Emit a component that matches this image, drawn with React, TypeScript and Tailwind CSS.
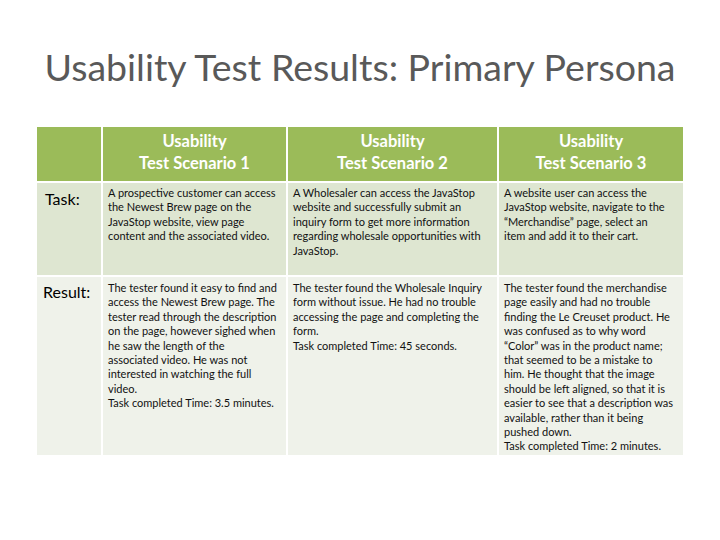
import React from "react";

const scenarios = [
  {
    title: ["Usability", "Test Scenario 1"],
    task: [
      "A prospective customer can access",
      "the Newest Brew page on the",
      "JavaStop website, view page",
      "content and the associated video.",
    ],
    result: [
      "The tester found it easy to find and",
      "access the Newest Brew page. The",
      "tester read through the description",
      "on the page, however sighed when",
      "he saw the length of the",
      "associated video. He was not",
      "interested in watching the full",
      "video.",
      "Task completed Time: 3.5 minutes.",
    ],
  },
  {
    title: ["Usability", "Test Scenario 2"],
    task: [
      "A Wholesaler can access the JavaStop",
      "website and successfully submit an",
      "inquiry form to get more information",
      "regarding wholesale opportunities with",
      "JavaStop.",
    ],
    result: [
      "The tester found the Wholesale Inquiry",
      "form without issue. He had no trouble",
      "accessing the page and completing the",
      "form.",
      "Task completed Time: 45 seconds.",
    ],
  },
  {
    title: ["Usability", "Test Scenario 3"],
    task: [
      "A website user can access the",
      "JavaStop website, navigate to the",
      "\u201cMerchandise\u201d page, select an",
      "item and add it to their cart.",
    ],
    result: [
      "The tester found the merchandise",
      "page easily and had no trouble",
      "finding the Le Creuset product. He",
      "was confused as to why word",
      "\u201cColor\u201d was in the product name;",
      "that seemed to be a mistake to",
      "him. He thought that the image",
      "should be left aligned, so that it is",
      "easier to see that a description was",
      "available, rather than it being",
      "pushed down.",
      "Task completed Time: 2 minutes.",
    ],
  },
];

const Lines: React.FC<{ lines: string[] }> = ({ lines }) => (
  <>
    {lines.map((line, i) => (
      <div key={i} className="whitespace-nowrap">
        {line}
      </div>
    ))}
  </>
);

export default function App() {
  return (
    <div
      className="w-[720px] h-[540px] bg-white overflow-hidden"
      style={{ fontFamily: "Lato, 'Open Sans', sans-serif" }}
    >
      <h1 className="pt-[45px] h-[127px] text-center text-[37.5px] leading-[44px] text-[#595959]">
        Usability Test Results: Primary Persona
      </h1>

      <div className="ml-[37px] grid grid-cols-[64px_183px_209px_184px] grid-rows-[54px_92px_178px] gap-x-[2px] gap-y-[2px]">
        <div className="bg-[#9bbb59]" />
        {scenarios.map((s, i) => (
          <div
            key={i}
            className="bg-[#9bbb59] flex flex-col items-center justify-center pb-[4px] text-white font-bold text-[16.5px] leading-[22px]"
          >
            <Lines lines={s.title} />
          </div>
        ))}

        <div className="bg-[#dee6d1] pl-[8px] pt-[4px] text-[16px] text-black">
          Task:
        </div>
        {scenarios.map((s, i) => (
          <div
            key={i}
            className="bg-[#dee6d1] pl-[5px] pt-[3px] text-[11px] leading-[14.4px] text-[#111]"
          >
            <Lines lines={s.task} />
          </div>
        ))}

        <div className="bg-[#eff2ea] pl-[6px] pt-[3px] text-[16px] text-black">
          Result:
        </div>
        {scenarios.map((s, i) => (
          <div
            key={i}
            className="bg-[#eff2ea] pl-[5px] pt-[4px] text-[11px] leading-[14.4px] text-[#111]"
          >
            <Lines lines={s.result} />
          </div>
        ))}
      </div>
    </div>
  );
}
